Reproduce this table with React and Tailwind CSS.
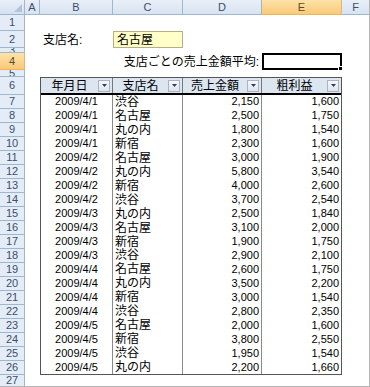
import React from "react";

const rows = [
  ["2009/4/1", "渋谷", "2,150", "1,600"],
  ["2009/4/1", "名古屋", "2,500", "1,750"],
  ["2009/4/1", "丸の内", "1,800", "1,540"],
  ["2009/4/1", "新宿", "2,300", "1,600"],
  ["2009/4/2", "名古屋", "3,000", "1,900"],
  ["2009/4/2", "丸の内", "5,800", "3,540"],
  ["2009/4/2", "新宿", "4,000", "2,600"],
  ["2009/4/2", "渋谷", "3,700", "2,540"],
  ["2009/4/3", "丸の内", "2,500", "1,840"],
  ["2009/4/3", "名古屋", "3,100", "2,000"],
  ["2009/4/3", "新宿", "1,900", "1,750"],
  ["2009/4/3", "渋谷", "2,900", "2,100"],
  ["2009/4/4", "名古屋", "2,600", "1,750"],
  ["2009/4/4", "丸の内", "3,500", "2,200"],
  ["2009/4/4", "新宿", "3,000", "1,540"],
  ["2009/4/4", "渋谷", "2,800", "2,350"],
  ["2009/4/5", "名古屋", "2,000", "1,600"],
  ["2009/4/5", "新宿", "3,800", "2,550"],
  ["2009/4/5", "渋谷", "1,950", "1,540"],
  ["2009/4/5", "丸の内", "2,200", "1,660"],
];

const rowLabels = ["1", "2", "3", "4", "5", "6"].concat(
  Array.from({ length: 21 }, (_, i) => String(i + 7))
);

const colLabels = ["A", "B", "C", "D", "E", "F"];

const Drop = () => (
  <span className="ml-auto mr-[2px] flex h-[12px] w-[12px] shrink-0 items-center justify-center border border-[#a8b4c4] bg-gradient-to-b from-[#f6f8fb] to-[#dfe5ee]">
    <svg width="5" height="3" viewBox="0 0 5 3">
      <path d="M0 0h5L2.5 3z" fill="#2b3f6b" />
    </svg>
  </span>
);

export default function App() {
  return (
    <div
      className="relative h-[387px] w-[370px] overflow-hidden border-r border-b border-[#b4b4b4] bg-white text-[11px] text-black"
      style={{ fontFamily: '"Liberation Sans", "Noto Sans CJK JP", sans-serif' }}
    >
      <div className="grid grid-cols-[25px_15px_73px_70px_79px_80px_28px] grid-rows-[15px_16px_17px_5px_17px_7px_18px_repeat(20,14px)_12px]">
        {/* corner */}
        <div className="relative border-b border-r border-[#9eb6ce] bg-gradient-to-b from-[#e9eff8] to-[#d5e1f0]">
          <svg className="absolute bottom-[2px] right-[2px]" width="8" height="8" viewBox="0 0 8 8">
            <path d="M8 0v8H0z" fill="#b5c3d6" />
          </svg>
        </div>

        {/* column headers */}
        {colLabels.map((c) => (
          <div
            key={c}
            className={`flex items-center justify-center border-b border-r text-[11px] leading-none ${
              c === "E"
                ? "border-[#f2b35c] bg-gradient-to-b from-[#fde2a8] to-[#f9c97a] text-[#5a4a2a]"
                : "border-[#9eb6ce] bg-gradient-to-b from-[#e9eff8] to-[#d8e3f1] text-[#3c4f6a]"
            }`}
          >
            {c}
          </div>
        ))}

        {/* row headers */}
        {rowLabels.map((r, i) => (
          <div
            key={r}
            className={`col-start-1 flex items-center justify-center overflow-hidden border-b border-r text-[11px] leading-none ${
              r === "4"
                ? "border-[#f2b35c] bg-gradient-to-b from-[#fde2a8] to-[#f9c97a] text-[#5a4a2a]"
                : "border-[#9eb6ce] bg-[#e4ecf7] text-[#3c4f6a]"
            }`}
            style={{ gridRowStart: i + 2 }}
          >
            {r}
          </div>
        ))}

        {/* row 2 */}
        <div className="col-start-3 row-start-3 flex items-center pl-[3px] text-[12px]">支店名:</div>
        <div className="col-start-4 row-start-3 flex items-center border border-[#b8ad86] bg-[#ffffc8] pl-[3px] text-[12px]">
          名古屋
        </div>

        {/* row 4 */}
        <div className="col-start-4 col-end-6 row-start-5 flex items-center justify-end whitespace-nowrap pr-[3px] text-[12px]">
          支店ごとの売上金額平均:
        </div>
        <div className="relative col-start-6 row-start-5 border-2 border-black">
          <span className="absolute -bottom-[3px] -right-[3px] h-[5px] w-[5px] border border-white bg-black" />
        </div>

        {/* table */}
        <div className="col-start-3 col-end-7 row-start-7 row-end-[28] flex flex-col border border-[#555]">
          <div className="flex h-[17px] border-b-2 border-black bg-[#dce6f1]">
            {["年月日", "支店名", "売上金額", "粗利益"].map((h, i) => (
              <div
                key={h}
                className={`flex items-center text-[12px] ${
                  i === 0 ? "w-[72px]" : i === 1 ? "w-[70px]" : i === 2 ? "w-[79px]" : "flex-1"
                } ${i < 3 ? "border-r border-[#777]" : ""}`}
              >
                <span className="flex-1 text-center">{h}</span>
                <Drop />
              </div>
            ))}
          </div>
          {rows.map((r, idx) => (
            <div key={idx} className="flex h-[14px] items-center leading-none">
              <div className="flex h-full w-[72px] items-center justify-center border-r border-[#8a8a8a]">{r[0]}</div>
              <div className="flex h-full w-[70px] items-center border-r border-[#8a8a8a] pl-[2px] text-[12px]">{r[1]}</div>
              <div className="flex h-full w-[79px] items-center justify-end border-r border-[#8a8a8a] pr-[2px]">{r[2]}</div>
              <div className="flex h-full flex-1 items-center justify-end pr-[2px]">{r[3]}</div>
            </div>
          ))}
        </div>
      </div>
    </div>
  );
}
